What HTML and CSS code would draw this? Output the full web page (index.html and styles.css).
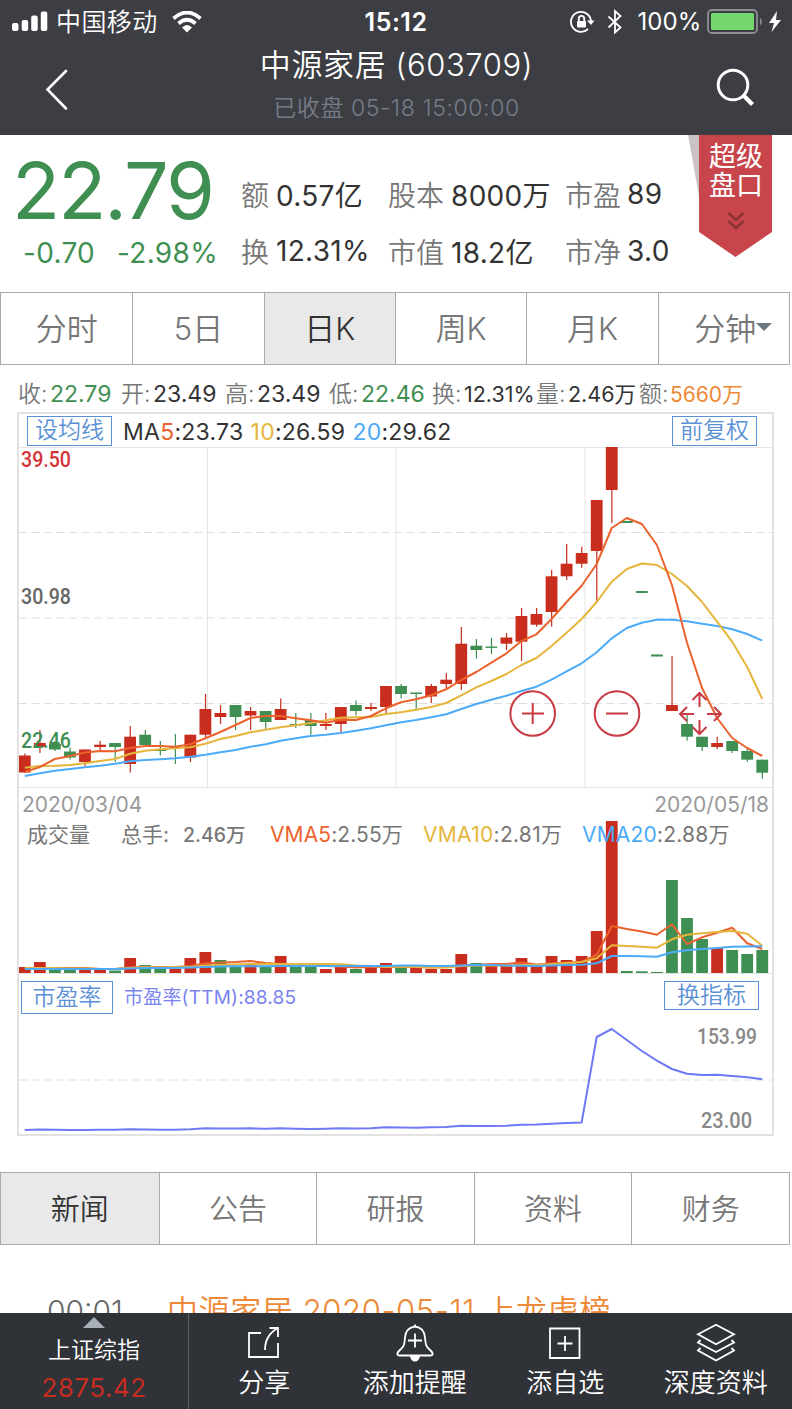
FILE: index.html
```html
<!DOCTYPE html>
<html lang="zh-CN">
<head>
<meta charset="UTF-8">
<title>中源家居 (603709)</title>
<link rel="stylesheet" href="styles.css">
</head>
<body>
<div class="app">

<header class="header">
  <div class="status">
    <svg class="signal" width="36" height="24" viewBox="0 0 36 24" fill="#fff">
      <rect x="0" y="14" width="6.500" height="8" rx="2"/><rect x="9.700" y="11" width="6.500" height="11" rx="2"/><rect x="19.200" y="6.500" width="6.500" height="15.500" rx="2"/><rect x="28.800" y="2.500" width="6.500" height="19.500" rx="2"/>
    </svg>
    <span class="carrier">中国移动</span>
    <svg class="wifi" width="30" height="22" viewBox="0 0 30 22" fill="none" stroke="#fff" stroke-width="3.800">
      <path d="M1.500 7.500Q15-4.500 28.500 7.500"/><path d="M6.500 12.500Q15 5 23.500 12.500"/><path d="M10 16.500Q15 11.500 20 16.500L15 21.500Z" fill="#fff" stroke="none"/>
    </svg>
    <b class="clock">15:12</b>
    <svg class="lock" width="25" height="24" viewBox="0 0 25 24" fill="none" stroke="#fff" stroke-width="1.800">
      <path d="M18 19A10 10 0 1 1 21 12"/><path d="M17 10.500h7.500L21 15z" fill="#fff" stroke="none"/><rect x="7" y="11" width="9" height="6.500" rx="1" fill="#fff" stroke="none"/><path d="M8.800 11V8.500a2.700 2.700 0 0 1 5.400 0V11"/>
    </svg>
    <svg class="bt" width="16" height="26" viewBox="0 0 16 26" fill="none" stroke="#fff" stroke-width="1.800">
      <path d="M1.500 7.500L13.500 18.500 8 23.500V2L13.500 7 1.500 18.500"/>
    </svg>
    <span class="percent">100%</span>
    <svg class="battery" width="76" height="26" viewBox="0 0 76 26">
      <rect x="1" y="1" width="49" height="23" rx="4" fill="none" stroke="#8d8f91" stroke-width="1.800"/><rect x="4" y="4" width="43" height="17" rx="1.500" fill="#75d76d"/>
      <path d="M53 8.500q3.500 4 0 8z" fill="#8d8f91"/><path d="M70 2L62 14h5l-2.500 9L74 11h-5z" fill="#fff"/>
    </svg>
  </div>
  <div class="titlebar">
    <svg class="back" width="24" height="42" viewBox="0 0 24 42" fill="none" stroke="#fff" stroke-width="2.600" stroke-linecap="round"><path d="M21 2L2.500 20.500 21 39.500"/></svg>
    <div class="title">
      <h1>中源家居 (603709)</h1>
      <p>已收盘 05-18 15:00:00</p>
    </div>
    <svg class="search" width="40" height="40" viewBox="0 0 40 40" fill="none" stroke="#fff" stroke-width="3"><circle cx="17" cy="17" r="14.800"/><path d="M27 27l9.500 9.500" stroke-width="4.200"/></svg>
  </div>
</header>

<section class="quote">
  <div class="price">
    <strong>22.79</strong>
    <div class="change"><span>-0.70</span><span>-2.98%</span></div>
  </div>
  <dl class="stats">
    <div><dt>额</dt><dd>0.57亿</dd></div><div><dt>股本</dt><dd>8000万</dd></div><div><dt>市盈</dt><dd>89</dd></div>
    <div><dt>换</dt><dd>12.31%</dd></div><div><dt>市值</dt><dd>18.2亿</dd></div><div><dt>市净</dt><dd>3.0</dd></div>
  </dl>
  <div class="ribbon">
    <svg width="86" height="124" viewBox="0 0 86 124">
      <path d="M1 0h13v72z" fill="#cbc3c3"/><path d="M12 0h73v97l-36.500 25L12 97z" fill="#c8464b"/>
      <path d="M41.500 78l7.500 7 7.500-7M41.500 86l7.500 7 7.500-7" fill="none" stroke="#8b3237" stroke-width="2.400"/>
    </svg>
    <p><span>超级</span><span>盘口</span></p>
  </div>
</section>

<nav class="tabs period">
  <a>分时</a><a>5日</a><a class="active">日K</a><a>周K</a><a>月K</a><a class="more">分钟<i></i></a>
</nav>

<div class="ohlc">
  <p><span>收:</span><b class="down">22.79</b></p>
  <p><span>开:</span><b>23.49</b></p>
  <p><span>高:</span><b>23.49</b></p>
  <p><span>低:</span><b class="down">22.46</b></p>
  <p class="small"><span>换:</span><b>12.31%</b></p>
  <p class="small"><span>量:</span><b>2.46万</b></p>
  <p class="amount"><span>额:</span><b>5660万</b></p>
</div>

<section class="chart">
  <div class="ma-bar">
    <button class="btn">设均线</button>
    <p>MA<i class="c5">5</i>:23.73 <i class="c10">10</i>:26.59 <i class="c20">20</i>:29.62</p>
    <button class="btn">前复权</button>
  </div>
  <svg id="kline" class="plot" width="755" height="341" viewBox="18 447 755 341"></svg>
  <div class="dates"><span>2020/03/04</span><span>2020/05/18</span></div>
  <div class="volume">
    <svg id="volume" class="plot" width="755" height="153" viewBox="18 821 755 153"></svg>
    <div class="vol-bar">
      <span>成交量</span><span>总手:</span><b>2.46万</b>
      <span><i class="c5">VMA5</i>:2.55万</span><span><i class="c10">VMA10</i>:2.81万</span><span><i class="c20">VMA20</i>:2.88万</span>
    </div>
  </div>
  <div class="pe">
    <div class="pe-bar">
      <button class="btn big">市盈率</button>
      <span>市盈率(TTM):88.85</span>
      <button class="btn">换指标</button>
    </div>
    <svg id="pe" class="plot" width="755" height="120" viewBox="18 1015 755 120"></svg>
  </div>
</section>

<nav class="tabs info">
  <a class="active">新闻</a><a>公告</a><a>研报</a><a>资料</a><a>财务</a>
</nav>

<div class="news"><time>00:01</time><span>中源家居 2020-05-11 上龙虎榜</span></div>

<footer class="footer">
  <div class="index"><i></i><span>上证综指</span><b>2875.42</b></div>
  <a>
    <svg width="40" height="40" viewBox="0 0 40 40"><path d="M17 9H5v24h29V19M25.500 4H34v9M34 4Q21 11 21 26"/></svg>
    <span>分享</span>
  </a>
  <a>
    <svg width="40" height="40" viewBox="0 0 40 40"><path d="M20 .500v2M20 2.500q9 1 10 11c.5 7 1 9 5 12.500 4 3.500 3 5.500 0 5.500H5c-3 0-4-2 0-5.500 4-3.500 4.500-5.500 5-12.500q1-10 10-11zM20 9.500v14M13 16.500h14"/><path d="M16 32.500h8q-1 4-4 4t-4-4z" fill="#fff"/></svg>
    <span>添加提醒</span>
  </a>
  <a>
    <svg width="40" height="40" viewBox="0 0 40 40"><path d="M5 4.500h29.500V34H5zM20 12v15M12.500 19.500h15"/></svg>
    <span>添自选</span>
  </a>
  <a>
    <svg width="40" height="40" viewBox="0 0 40 40"><path d="M20 .800l18 9.500-18 10-18-10zM4.500 16L2 18.500l18 9.500 18-9.500-2.500-2.500M4.500 24L2 26.500l18 10 18-10-2.500-2.500"/></svg>
    <span>深度资料</span>
  </a>
</footer>

</div>
<script src="chart.js"></script>
</body>
</html>
```
FILE: styles.css
```css
* { box-sizing: border-box; margin: 0; padding: 0; }
body {
  width: 792px;
  background: #fff;
  font-family: Inter, "Noto Sans CJK SC", sans-serif;
  font-weight: 400;
  color: #333;
}
.app {
  height: 1409px;
  overflow: hidden;
  display: flex;
  flex-direction: column;
}
i { font-style: normal; }
svg { display: block; flex: none; }
p, span, b, dt, dd, a, h1 { white-space: nowrap; }

/* header */
.header { height: 135px; flex: none; background: #3c3e43; color: #fff; }
.status {
  height: 43px;
  display: flex;
  align-items: center;
  padding-left: 12px;
  font-size: 24px;
}
.signal { margin-top: -2px; }
.carrier { margin: -3px 0 0 8px; font-size: 25px; font-weight: 350; letter-spacing: .4px; }
.wifi { margin-left: 14px; }
.clock { margin-left: 163px; width: 67px; font-weight: 600; font-size: 25px; letter-spacing: .5px; }
.lock { margin-left: 138px; }
.bt { margin-left: 12px; }
.percent { margin-left: 15px; width: 63px; }
.battery { margin-left: 6px; }
.titlebar {
  height: 92px;
  display: flex;
  justify-content: space-between;
  padding: 0 36px 0 45px;
}
.back { margin-top: 26px; }
.title { text-align: center; padding-left: 8px; }
.title h1 { font-size: 31px; line-height: 44px; font-weight: 350; letter-spacing: .6px; }
.title p { font-size: 23px; line-height: 42px; color: #777c87; font-weight: 350; letter-spacing: .6px; }
.search { margin-top: 25px; }

/* quote */
.quote { height: 157px; flex: none; display: flex; position: relative; }
.price { width: 241px; color: #3f8f53; }
.price strong {
  display: block;
  padding: 13px 0 0 12px;
  font-size: 79px;
  line-height: 84px;
  font-weight: 400;
  letter-spacing: -2px;
}
.change { display: flex; gap: 22px; padding: 1px 0 0 23px; font-size: 28px; line-height: 40px; letter-spacing: .3px; }
.stats {
  display: grid;
  grid-template-columns: 147px 178px 120px;
  grid-template-rows: 57px 57px;
  padding-top: 30px;
  font-size: 28px;
}
.stats div { display: flex; gap: 7px; align-items: center; }
.stats dt { color: #777; font-weight: 350; }
.stats dd { letter-spacing: .3px; }
.stats div:nth-child(3n) { gap: 6px; margin-left: -1px; letter-spacing: 0; }
.ribbon { position: absolute; left: 687px; top: 0; }
.ribbon p {
  position: absolute;
  left: 22px;
  top: 7px;
  font-size: 27px;
  line-height: 29px;
  color: #fff;
}
.ribbon span { display: block; }

/* tabs */
.tabs {
  display: grid;
  grid-auto-flow: column;
  grid-auto-columns: 1fr;
  flex: none;
  width: 790px;
  height: 73px;
  border: 1px solid #aaa;
}
.tabs a {
  display: flex;
  align-items: center;
  justify-content: center;
  padding-bottom: 4px;
  color: #777;
  font-weight: 350;
}
.tabs a + a { border-left: 1px solid #aaa; }
.tabs a.active { background: #e9e9e9; color: #333; }
.period { font-size: 31px; }
.tabs .more { padding-left: 19px; }
.more i { border: 8px solid transparent; border-top-color: #6c7780; border-bottom: 0; }
.info { margin-top: 36px; font-size: 29px; }

/* price line */
.ohlc {
  display: grid;
  grid-template-columns: 103px 104px 104px 103px 104px 103px 104px;
  height: 47px;
  flex: none;
  padding: 12px 0 0 18px;
  font-size: 23px;
  line-height: 35px;
}
.ohlc p { display: flex; }
.ohlc span { width: 32px; color: #777; font-weight: 350; }
.ohlc b { font-weight: 400; }
.ohlc .small b { font-size: 21.500px; }
.ohlc .amount b { font-size: 21px; color: #ed8937; }
.ohlc .down { color: #3f8f53; }

/* chart */
.chart {
  width: 757px;
  height: 724px;
  flex: none;
  margin-left: 17px;
  border: 2px solid #e2e2e2;
}
.chart > * { margin-left: -1px; }
.ma-bar { height: 33px; display: flex; align-items: center; padding: 0 15px 0 9px; }
.ma-bar p { flex: 1; padding: 2px 0 0 11px; font-size: 23px; letter-spacing: .25px; word-spacing: .5px; }
.btn {
  width: 85px;
  height: 30px;
  padding-bottom: 4px;
  border: 1px solid #5a90d5;
  background: #fff;
  color: #5a90d5;
  font: 350 23px/23px "Noto Sans CJK SC", sans-serif;
}
.c5 { color: #ec622d; }
.c10 { color: #e5b53c; }
.c20 { color: #4babf8; }
.dates {
  height: 33px;
  display: flex;
  justify-content: space-between;
  padding: 0 3px 0 4px;
  font-size: 21px;
  line-height: 33px;
  color: #999;
}
.volume { position: relative; height: 153px; }
.vol-bar {
  position: absolute;
  left: 9px;
  top: 0;
  display: flex;
  font-size: 21px;
  line-height: 28px;
  color: #777;
}
.vol-bar span:nth-child(1) { width: 94px; }
.vol-bar span:nth-child(2) { width: 62px; }
.vol-bar b { width: 87px; font-weight: 500; font-size: 19.500px; }
.vol-bar span:nth-child(4) { width: 153px; letter-spacing: .1px; }
.vol-bar span:nth-child(5) { width: 159px; letter-spacing: .3px; }
.vol-bar span:nth-child(6) { letter-spacing: .2px; }
.pe-bar { height: 41px; display: flex; align-items: flex-start; padding: 7px 13px 0 3px; }
.pe-bar span { flex: 1; padding-left: 11px; font-size: 19px; line-height: 33px; color: #7b83f2; letter-spacing: .2px; }
.pe-bar .btn { width: 95px; height: 29px; }
.pe-bar .btn.big { width: 92px; height: 33px; }
.grid { stroke: #e4e4e4; stroke-width: 1; }
.dash { stroke: #dedede; stroke-width: 1; stroke-dasharray: 8 4.500; }
.plot text { font-family: Roboto, sans-serif; font-size: 22px; font-weight: 500; }
.tool { fill: none; stroke: #c93a43; stroke-width: 2; }
.line { fill: none; stroke-width: 2; stroke-linejoin: round; }

/* news */
.news {
  height: 68px;
  flex: none;
  overflow: hidden;
  display: flex;
  padding: 46px 0 0 47px;
  font-size: 31px;
  line-height: 40px;
  color: #666;
  font-weight: 350;
}
.news time { width: 120px; font-size: 30px; }
.news span { color: #ed8937; letter-spacing: .6px; }

/* footer */
.footer { flex: 1; display: flex; background: #2f3237; color: #fff; }
.footer > * {
  width: 150.500px;
  display: flex;
  flex-direction: column;
  align-items: center;
}
.footer a { padding-top: 11px; font-size: 26px; font-weight: 350; line-height: 38px; }
.footer svg { fill: none; stroke: #fff; stroke-width: 1.800; }
.footer .index { width: 189px; border-right: 1px solid #5b5e62; }
.index i { margin-top: 4px; border: 11px solid transparent; border-bottom-color: #a8afb9; border-top: 0; }
.index span { font-size: 23px; line-height: 36px; margin-top: 4px; font-weight: 350; }
.index b { font-size: 26px; line-height: 40px; font-weight: 400; color: #c62d20; letter-spacing: .5px; }
```
FILE: chart.js
```js
const RED = '#c82d1d', GREEN = '#3f8f53';
const STEP = 15.05, X0 = 24.8;

// [up, body top, body bottom, wick top, wick bottom]
const candles = [
  [1,755.5,772.5,753.5,772.5],[1,743,747,730,753],[0,744,749.5,741,751],[0,751.5,757.5,747.5,759.5],
  [1,749.5,762,749.5,766.5],[1,744.7,747,741,750],[0,743,747,743,762],[1,736.7,764,726,772.5],
  [0,734.7,745,730,745],[0,749.5,751,741,755.5],[0,746.7,748,734,764],[1,734.7,757.5,734.7,762],
  [1,709,734.7,694,737],[1,713,717,705,724],[0,705,717,705,730],[1,711,715.5,707,730],
  [0,711,722,711,730],[1,709,720,698.5,720],[0,724,725.5,713,728],[0,720,726,713,734.7],
  [1,724,726,713,730],[1,707,724,707,732],[0,705,711,700.5,715.5],[1,707,709,703,711],
  [1,686,707,686,713],[0,686,694,684,698.5],[0,692.5,694,692.5,709],[1,686,696.5,684,703],
  [1,679.7,684,673,688],[1,643.7,684,627,690],[0,645.7,650,639,658.5],[0,646.5,647.9,637.7,654],
  [1,637.5,643.7,633,650],[1,616,641.7,608,661],[1,614,624.7,608,626.7],[1,576.3,612,570,626.7],
  [1,563.7,576.3,544,580],[1,553,563.7,546.7,567.7],[1,500,551,500,603],[1,447,490,447,523],
  [0,521,523,521,523],[0,591,593,591,593],[0,654.5,656.5,654.5,656.5],[1,705,711,656,711],
  [0,724,736.7,715,740.7],[0,736.7,747,736.7,751],[1,743,747,736.7,749],[0,741,751,741,753],
  [0,751,759.7,749,762],[0,759.7,772.7,759.7,778.7]
];

const ma5 = [772,767,759,756,752.5,751,751.3,748,746,746,746.7,744.3,738.3,732,725,718,716,716,718.3,720.3,722.7,719.7,720,716,708.3,702.3,699.3,695.3,689.3,680,672,662.7,653.3,641,634.3,619,602,585.7,564,528,518,524,545,585,642.7,688,718,738,748,756];
const ma10 = [767.7,766,765.7,765,763.3,761,759,753.7,750.7,749.3,748.3,747.3,743.7,739,736,732.3,729.7,727.3,725.3,723,720.3,717.7,717.3,717,714,712.3,709.7,707,703,695.3,687.3,681,674,665,658,646,632.7,619,602,581.7,569,563.5,565,574,586,602,621.7,641.7,667,699];
const ma20 = [776,773.3,770.7,769,767.3,765.7,763.7,761.3,760,759.3,758.3,756.7,754.7,752.3,750,746.7,744.3,740.7,738.3,736,734.7,733,730.7,728.3,725.3,722.3,720,717.3,714.3,709,704,699.7,695.7,691,686.7,679.7,671.3,663.3,652.3,638.3,628,622.7,619.7,619.7,621.3,623.7,626,629.3,634,640.7];

const vol = [967,962,969,970,970,970,970.5,958,965,968,969,958,952,960,966,964,967,956,966,966,969,967,969,968,963,967,968,969,969,954,963,965,966,958,966,956,960,956,931,821,971,971.3,972,880,918,939,948,950,954,950];
const volGreen = [2,3,6,8,9,13,14,16,18,19,22,25,30,40,41,42,43,44,45,47,48,49];
const vma5 = [968,968,968,968,968,969,969,967.5,967,967,967,966,963.5,962.5,962,961,963,964,964.5,965,966,966.5,967.5,967,967,967,967,967.5,967,965.5,965,964,964,962.5,964.5,963.5,962.7,961.7,955,926,929,931.5,934.7,924.3,944,937.3,932.7,927.7,943.3,949];
const vma10 = [968,968,968,968.5,968.5,969,969,968,967,967.5,967,967,965.5,965,964.5,964,964,964,964,964,964,964.2,965.5,966,967,966.5,967,967.5,967.5,966,965.5,965.5,965.5,965,965,964,963,962,958.3,945.3,946,946.7,947.7,939.3,934.7,933.3,932,931,933.7,945.7];
const vma20 = [969,969,969,969,969,969,969,968.5,968,968,968,967.5,967,966.5,966.3,966.3,966.3,966,966,966,966,966,966,966,966,965.5,965.5,966,966,965.5,965,965,965.5,965.7,966,965.5,965,964.7,963.3,956,956,956.3,956.7,952.3,950.3,949,948,946.7,946.5,946.3];
const pe = [1130,1129.6,1129.7,1130,1130,1129.8,1129.7,1129.3,1129.6,1129.8,1129.8,1129.3,1128.3,1128.5,1128.6,1128.3,1128.8,1128.3,1128.8,1129,1128.8,1128.3,1128.5,1128.2,1127.2,1127.6,1127.7,1127.3,1127,1125.8,1126,1126,1125.7,1124.8,1124.6,1123.7,1123,1122.4,1037,1029,1040,1051,1060.7,1069,1073.7,1075,1074.7,1076,1077.3,1079.3];

const cx = i => X0 + i * STEP;
const rect = (i, top, bottom, color) => {
  const left = Math.max(19, cx(i) - 5.9);
  return `<rect x="${left}" y="${top}" width="${cx(i) + 5.9 - left}" height="${bottom - top}" fill="${color}"/>`;
};
const line = (data, color) =>
  `<polyline class="line" stroke="${color}" points="${data.map((y, i) => cx(i) + ',' + y).join(' ')}"/>`;
const hline = (y, cls) => `<path class="${cls}" d="M19 ${y}H773"/>`;
const text = (x, y, w, color, str) =>
  `<text x="${x}" y="${y}" textLength="${w}" lengthAdjust="spacingAndGlyphs" fill="${color}">${str}</text>`;

let k = hline(447.5, 'grid') + hline(787.5, 'grid');
k += hline(532.5, 'dash') + hline(618, 'dash') + hline(703.5, 'dash');
k += '<path class="grid" d="M207.500 447V787M396 447V787M585 447V787"/>';
k += text(21, 467, 50, '#d43338', '39.50') + text(21, 604, 50, '#666', '30.98');
candles.forEach(([up, top, bottom, high, low], i) => {
  const color = up ? RED : GREEN;
  k += `<rect x="${cx(i) - .5}" y="${high}" width="1.2" height="${low - high}" fill="${color}"/>` + rect(i, top, bottom, color);
});
k += text(21, 748, 50, GREEN, '22.46');
k += line(ma20, '#4babf8') + line(ma10, '#e5b53c') + line(ma5, '#ec622d');
// zoom and drag controls
k += '<path class="tool" d="M555 713.500a22.300 22.300 0 1 1-44.600 0a22.300 22.300 0 1 1 44.600 0M522 713.500h22M532.700 703v21M639.300 713.500a22.300 22.300 0 1 1-44.600 0a22.300 22.300 0 1 1 44.600 0M606 713.500h22"/>';
k += '<path class="tool" d="M699.500 707V694M692.500 700l7-7 7 7M699.500 720v13M692.500 727l7 7 7-7M694 714H681M687 707l-7 7 7 7M707 714h13M714 707l7 7-7 7"/>';
document.getElementById('kline').innerHTML = k;

let v = hline(973.5, 'grid');
vol.forEach((y, i) => v += rect(i, y, 973, volGreen.includes(i) ? GREEN : RED));
v += line(vma5, '#ec622d') + line(vma10, '#e5b53c') + line(vma20, '#4babf8');
document.getElementById('volume').innerHTML = v;

document.getElementById('pe').innerHTML = hline(1080, 'dash') + line(pe, '#6f79f5')
  + text(697, 1044, 60, '#888', '153.99') + text(701, 1128, 51, '#888', '23.00');
```
